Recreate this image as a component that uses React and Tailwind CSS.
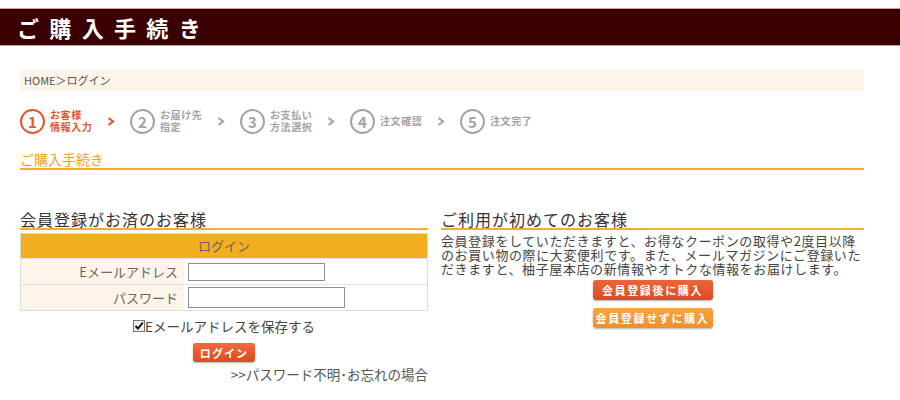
const jp = { fontFamily: '"Noto Sans CJK JP", "Noto Sans", sans-serif' };

const steps = [
  { n: "1", label: ["お客様", "情報入力"], active: true },
  { n: "2", label: ["お届け先", "指定"] },
  { n: "3", label: ["お支払い", "方法選択"] },
  { n: "4", label: ["注文確認"] },
  { n: "5", label: ["注文完了"] },
];

function Step({ step, last }) {
  const color = step.active ? "text-[#e4552b]" : "text-[#a3a3a3]";
  const border = step.active ? "border-[#e4552b]" : "border-[#a3a3a3]";
  return (
    <div className="flex items-center">
      <div className={`w-[25px] h-[25px] rounded-full border-[2.5px] ${border} ${color} flex items-center justify-center text-[15px] font-bold leading-none`}>
        {step.n}
      </div>
      <div className={`ml-[5px] w-[50px] text-[10px] tracking-[0.6px] font-bold leading-[12px] ${color}`}>
        {step.label.map((l) => (
          <div key={l} className="whitespace-nowrap">{l}</div>
        ))}
      </div>
      {!last && (
        <svg width="8" height="9" viewBox="0 0 8 9" className="ml-[7px] mr-[15px]">
          <path d="M1.5 1 L6 4.5 L1.5 8" fill="none" stroke={step.active ? "#e4552b" : "#a3a3a3"} strokeWidth="2.2" />
        </svg>
      )}
    </div>
  );
}

export default function App() {
  return (
    <div className="w-[900px] h-[400px] bg-white overflow-hidden text-[#333]" style={jp}>
      {/* Title bar */}
      <div className="mt-2 h-[38px] bg-[#3a0000] border-y border-[#c9a3a3] flex items-center pl-[17px]">
        <h1 className="text-white text-[22px] font-bold tracking-[0.47em]">ご購入手続き</h1>
      </div>

      <div className="mx-5 w-[844px]">
        {/* Breadcrumb */}
        <div className="mt-6 h-[21px] bg-[#fdf4e9] flex items-center pl-1 text-[11px] text-[#555]">
          HOME＞ログイン
        </div>

        {/* Steps */}
        <div className="mt-[17px] flex items-center h-[26px]">
          {steps.map((s, i) => (
            <Step key={s.n} step={s} last={i === steps.length - 1} />
          ))}
        </div>

        {/* Section title */}
        <div className="mt-[16px] border-b-2 border-[#f5b021] text-[14px] leading-[18px] text-[#f5a11e]">
          ご購入手続き
        </div>

        <div className="mt-[40px] flex gap-[13px]">
          {/* Registered members */}
          <div className="w-[408px]">
            <h2 className="text-[16px] tracking-[1px] leading-[18px] border-b-2 border-[#f5b021]">会員登録がお済のお客様</h2>
            <div className="mt-[3px] border border-[#dcdcdc] text-[13px]">
              <div className="h-[24px] bg-[#f2ae1e] flex items-center justify-center text-[#666]">ログイン</div>
              <div className="flex h-[26px] border-t border-[#e2e2e2]">
                <div className="w-[163px] bg-[#fdf4ea] flex items-center justify-end pr-[6px] text-[#666]">Eメールアドレス</div>
                <div className="flex items-center pl-[4px]">
                  <input className="w-[137px] h-[18px] border border-[#8f8f8f] bg-white" />
                </div>
              </div>
              <div className="flex h-[26px] border-t border-[#e2e2e2]">
                <div className="w-[163px] bg-[#fdf4ea] flex items-center justify-end pr-[6px] text-[#666]">パスワード</div>
                <div className="flex items-center pl-[4px]">
                  <input type="password" className="w-[157px] h-[21px] border border-[#8f8f8f] bg-white" />
                </div>
              </div>
            </div>
            <div className="mt-[5px] flex justify-center items-center text-[13.5px] text-[#444]">
              <span className="w-[12px] h-[12px] border border-[#777] bg-[#eee] flex items-center justify-center">
                <svg width="10" height="10" viewBox="0 0 10 10">
                  <path d="M1.5 5 L4 7.5 L8.8 1.5" fill="none" stroke="#111" strokeWidth="2" />
                </svg>
              </span>
              <span>Eメールアドレスを保存する</span>
            </div>
            <div className="mt-[7px] flex justify-center">
              <button className="w-[62px] h-[19px] rounded-[3px] bg-gradient-to-b from-[#f16a3c] to-[#dd4a22] text-white text-[11px] font-bold tracking-[0.1em] shadow-[0_1px_2px_rgba(0,0,0,0.3)]">
                ログイン
              </button>
            </div>
            <div className="mt-[2px] text-right text-[13.5px] text-[#555]">&gt;&gt;パスワード不明･お忘れの場合</div>
          </div>

          {/* First time */}
          <div className="w-[423px]">
            <h2 className="text-[16px] tracking-[1px] leading-[18px] border-b-2 border-[#f5b021]">ご利用が初めてのお客様</h2>
            <p className="mt-[4px] text-[13px] tracking-[0.6px] leading-[14px] text-[#444] whitespace-nowrap">
              会員登録をしていただきますと、お得なクーポンの取得や2度目以降
              <br />
              のお買い物の際に大変便利です。また、メールマガジンにご登録いた
              <br />
              だきますと、柚子屋本店の新情報やオトクな情報をお届けします。
            </p>
            <div className="mt-[4px] flex flex-col items-center gap-[8px]">
              <button className="w-[120px] h-[20px] rounded-[3px] bg-gradient-to-b from-[#ec6438] to-[#dc4b24] text-white text-[11px] font-bold tracking-[0.15em] shadow-[0_1px_2px_rgba(0,0,0,0.3)]">
                会員登録後に購入
              </button>
              <button className="w-[120px] h-[20px] rounded-[3px] bg-gradient-to-b from-[#f8a540] to-[#ef8f28] text-white text-[11px] font-bold tracking-[0.15em] shadow-[0_1px_2px_rgba(0,0,0,0.3)]">
                会員登録せずに購入
              </button>
            </div>
          </div>
        </div>
      </div>
    </div>
  );
}
